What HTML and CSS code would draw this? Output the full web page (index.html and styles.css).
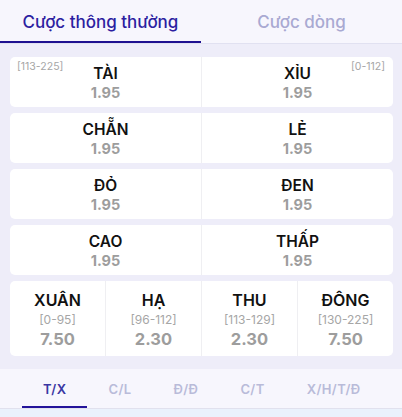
FILE: index.html
```html
<!DOCTYPE html>
<html lang="vi">
<head>
<meta charset="utf-8">
<link rel="stylesheet" href="styles.css">
</head>
<body>
<div class="tabs">
  <div class="tab active">Cược thông thường</div>
  <div class="tab">Cược dòng</div>
</div>
<div class="board">
  <div class="card">
    <div class="cell"><span class="range range-left">[113-225]</span><span class="label">TÀI</span><span class="odd">1.95</span></div>
    <div class="cell"><span class="range range-right">[0-112]</span><span class="label">XỈU</span><span class="odd">1.95</span></div>
  </div>
  <div class="card">
    <div class="cell"><span class="label">CHẴN</span><span class="odd">1.95</span></div>
    <div class="cell"><span class="label">LẺ</span><span class="odd">1.95</span></div>
  </div>
  <div class="card">
    <div class="cell"><span class="label">ĐỎ</span><span class="odd">1.95</span></div>
    <div class="cell"><span class="label">ĐEN</span><span class="odd">1.95</span></div>
  </div>
  <div class="card">
    <div class="cell"><span class="label">CAO</span><span class="odd">1.95</span></div>
    <div class="cell"><span class="label">THẤP</span><span class="odd">1.95</span></div>
  </div>
  <div class="card card-four">
    <div class="cell"><span class="label big">XUÂN</span><span class="sub">[0-95]</span><span class="odd big">7.50</span></div>
    <div class="cell"><span class="label big">HẠ</span><span class="sub">[96-112]</span><span class="odd big">2.30</span></div>
    <div class="cell"><span class="label big">THU</span><span class="sub">[113-129]</span><span class="odd big">2.30</span></div>
    <div class="cell"><span class="label big">ĐÔNG</span><span class="sub">[130-225]</span><span class="odd big">7.50</span></div>
  </div>
</div>
<div class="subtabs">
  <div class="subtab active">T/X</div>
  <div class="subtab">C/L</div>
  <div class="subtab">Đ/Đ</div>
  <div class="subtab">C/T</div>
  <div class="subtab">X/H/T/Đ</div>
</div>
<div class="footer"></div>
</body>
</html>
```

FILE: styles.css
```css
html, body {
  margin: 0;
  padding: 0;
}
body {
  width: 402px;
  height: 417px;
  overflow: hidden;
  background: #eeedf9;
  font-family: Inter, "Noto Sans", sans-serif;
}
.tabs {
  display: flex;
  height: 43px;
  background: #f7f6fd;
  border-bottom: 1px solid #e1e1f1;
}
.tab {
  flex: 1;
  display: flex;
  align-items: center;
  justify-content: center;
  font-size: 17px;
  font-weight: 500;
  color: #a9a9d2;
  border-bottom: 2px solid transparent;
  box-sizing: border-box;
  padding-top: 2px;
}
.tab.active {
  color: #2c1ea1;
  border-bottom-color: #1f1190;
}
.board {
  display: flex;
  flex-direction: column;
  gap: 6px;
  padding: 13px 9px 13px 10px;
}
.card {
  display: flex;
  height: 50px;
  background: #ffffff;
  border-radius: 5px;
}
.card-four {
  height: 75px;
}
.cell {
  position: relative;
  flex: 1;
  display: flex;
  flex-direction: column;
  align-items: center;
  justify-content: center;
  padding-top: 3px;
  border-left: 1px solid #efeff2;
}
.card-four .cell {
  padding-top: 1px;
}
.cell:first-child {
  border-left: none;
}
.label {
  font-size: 15.5px;
  line-height: 18px;
  font-weight: 600;
  color: #111111;
}
.odd {
  font-size: 14.5px;
  line-height: 19px;
  font-weight: 700;
  color: #9d9d9d;
}
.label.big {
  font-size: 16px;
  line-height: 20px;
}
.sub {
  font-size: 12px;
  line-height: 19px;
  color: #a6a6a6;
}
.odd.big {
  font-size: 16.5px;
  line-height: 20px;
}
.range {
  position: absolute;
  top: 3px;
  font-size: 10.5px;
  line-height: 14px;
  color: #a6a6a6;
}
.range-left {
  left: 7px;
}
.range-right {
  right: 8px;
}
.subtabs {
  display: flex;
  height: 39px;
  padding-left: 22px;
  background: #f7f6fd;
  border-bottom: 1px solid #e1e1ee;
}
.subtab {
  display: flex;
  align-items: center;
  justify-content: center;
  padding: 2px 21px 0;
  font-size: 13px;
  font-weight: 600;
  letter-spacing: 0.4px;
  color: #b9bbd9;
  border-bottom: 2px solid transparent;
}
.subtab.active {
  color: #3a36a3;
  border-bottom-color: #23139a;
}
.footer {
  height: 8px;
  background: #eaf1fc;
}
```
